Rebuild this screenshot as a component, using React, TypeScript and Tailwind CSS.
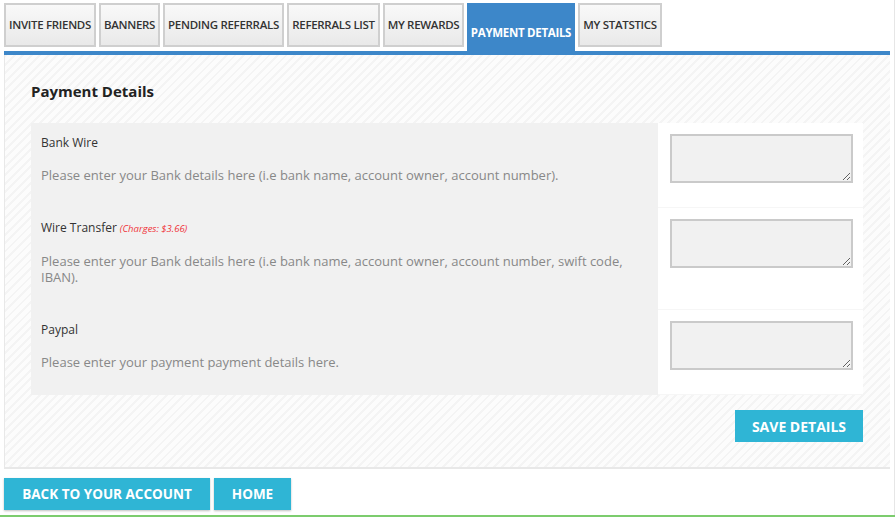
import React from 'react';

const tabs = [
  { label: 'INVITE FRIENDS', w: 'w-[92px]' },
  { label: 'BANNERS', w: 'w-[61px]' },
  { label: 'PENDING REFERRALS', w: 'w-[121px]' },
  { label: 'REFERRALS LIST', w: 'w-[93px]' },
  { label: 'MY REWARDS', w: 'w-[81px]' },
  { label: 'PAYMENT DETAILS', w: 'w-[108px]', active: true },
  { label: 'MY STATSTICS', w: 'w-[84px]' },
];

const methods = [
  {
    name: 'Bank Wire',
    desc: 'Please enter your Bank details here (i.e bank name, account owner, account number).',
  },
  {
    name: 'Wire Transfer',
    charges: '(Charges: $3.66)',
    desc: 'Please enter your Bank details here (i.e bank name, account owner, account number, swift code, IBAN).',
  },
  {
    name: 'Paypal',
    desc: 'Please enter your payment payment details here.',
  },
];

export default function App() {
  return (
    <div className="w-[895px] h-[517px] bg-white font-['Open_Sans',sans-serif] overflow-hidden flex flex-col">
      <div className="flex-1 pl-1 pr-1 border-r border-[#e6e6e6]">
        {/* Tabs */}
        <div className="flex items-start gap-[3px] pt-[3px] h-[51px]">
          {tabs.map((t) =>
            t.active ? (
              <div
                key={t.label}
                className={`${t.w} h-[48px] bg-[#3d87c9] text-white text-[11.5px] font-bold tracking-[-0.3px] whitespace-nowrap flex items-center justify-center pt-[12px]`}
              >
                {t.label}
              </div>
            ) : (
              <div
                key={t.label}
                className={`${t.w} h-[44px] border-2 border-[#cfcfcf] bg-gradient-to-b from-[#f9f9f9] to-[#e9e9e9] text-[#333] text-[11.5px] font-semibold tracking-[-0.3px] whitespace-nowrap flex items-center justify-center`}
              >
                {t.label}
              </div>
            )
          )}
        </div>
        <div className="h-[4px] bg-[#3d87c9]" />

        {/* Panel */}
        <div className="h-[414px] border-b-2 border-l border-[#e8e8e8] bg-[repeating-linear-gradient(135deg,#f4f4f4_0px,#f4f4f4_2px,#fcfcfc_2px,#fcfcfc_6px)] pl-[26px] pr-[27px] pt-[26px]">
          <h2 className="text-[15px] font-bold text-[#222] leading-[20px]">Payment Details</h2>
          <div className="mt-[22px] flex flex-col">
            {methods.map((m, i) => (
              <div key={m.name} className={`flex ${i === 1 ? 'h-[102px]' : 'h-[85px]'}`}>
                <div className="flex-1 bg-[#f1f1f1] pl-[10px] pr-[10px] pt-[11px]">
                  <div className="text-[12px] text-[#333] leading-[18px]">
                    {m.name}
                    {m.charges && (
                      <span className="ml-[3px] text-[9.5px] italic text-[#f0353b]">{m.charges}</span>
                    )}
                  </div>
                  <p className="mt-[15px] text-[13px] text-[#888] leading-[16px]">{m.desc}</p>
                </div>
                <div className="w-[205px] bg-white pl-[12px] pr-[10px] pt-[11px] border-b border-[#f6f6f6]">
                  <textarea className="w-[183px] h-[49px] bg-[#f1f1f1] border-2 border-[#cacaca] block outline-none" />
                </div>
              </div>
            ))}
          </div>
          <div className="flex justify-end mt-[15px]">
            <button className="w-[128px] h-[32px] bg-[#2fb5d5] text-white text-[14px] font-bold">
              SAVE DETAILS
            </button>
          </div>
        </div>

        {/* Bottom buttons */}
        <div className="flex gap-[4px] mt-[9px]">
          <button className="w-[206px] h-[32px] bg-[#2fb5d5] text-white text-[13.5px] font-bold shadow-[0_1px_2px_rgba(0,0,0,0.25)]">
            BACK TO YOUR ACCOUNT
          </button>
          <button className="w-[77px] h-[32px] bg-[#2fb5d5] text-white text-[13.5px] font-bold shadow-[0_1px_2px_rgba(0,0,0,0.25)]">
            HOME
          </button>
        </div>
      </div>
      <div className="h-[2px] bg-[#7ccc6e]" />
    </div>
  );
}
